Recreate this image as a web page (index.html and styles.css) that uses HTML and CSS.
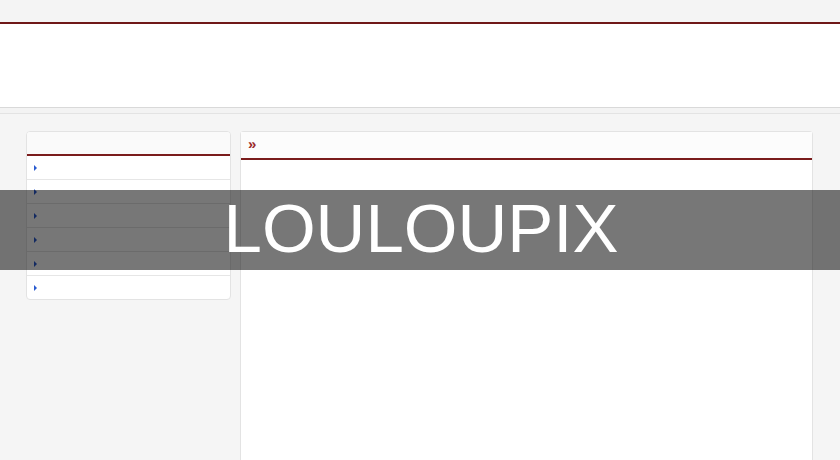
FILE: index.html
```html
<!DOCTYPE html>
<html>
<head>
<meta charset="utf-8">
<link rel="stylesheet" href="styles.css">
</head>
<body>
<div class="topbar"></div>
<div class="header"></div>
<div class="subband"></div>
<div class="content">
  <div class="sidebar">
    <div class="side-head"></div>
    <ul class="side-list">
      <li><span class="tri"></span></li>
      <li><span class="tri"></span></li>
      <li><span class="tri"></span></li>
      <li><span class="tri"></span></li>
      <li><span class="tri"></span></li>
      <li><span class="tri"></span></li>
    </ul>
  </div>
  <div class="mainbox">
    <div class="main-head"><span class="raquo">»</span></div>
    <div class="main-body"></div>
  </div>
</div>
<div class="overlay"><span class="title">LOULOUPIX</span></div>
</body>
</html>
```

FILE: styles.css
```css
html, body {
  margin: 0;
  padding: 0;
  height: 100%;
  overflow: hidden;
}
body {
  background: #f5f5f5;
  font-family: "Liberation Sans", Arial, sans-serif;
  position: relative;
}
.topbar {
  height: 22px;
  background: #f4f4f4;
  border-bottom: 2px solid #6f1818;
}
.header {
  height: 83px;
  background: #ffffff;
  border-bottom: 1px solid #d9d9d9;
}
.subband {
  height: 5px;
  background: #f3f3f3;
  border-bottom: 1px solid #e3e3e3;
}
.content {
  display: flex;
  align-items: flex-start;
  gap: 9px;
  padding: 17px 0 0 26px;
}
.sidebar {
  width: 203px;
  background: #ffffff;
  border: 1px solid #e3e3e3;
  border-radius: 4px;
  overflow: hidden;
}
.side-head {
  height: 22px;
  background: #fafafa;
  border-bottom: 2px solid #7a1c1c;
}
.side-list {
  list-style: none;
  margin: 0;
  padding: 0;
}
.side-list li {
  height: 23px;
  border-bottom: 1px solid #e6e6e6;
  display: flex;
  align-items: center;
  padding-left: 7px;
}
.side-list li:last-child {
  border-bottom: none;
}
.tri {
  width: 0;
  height: 0;
  border-top: 3px solid transparent;
  border-bottom: 3px solid transparent;
  border-left: 3px solid #2a5bd0;
}
.mainbox {
  width: 571px;
  height: 340px;
  background: #ffffff;
  border: 1px solid #e3e3e3;
  border-bottom: none;
  border-radius: 4px 4px 0 0;
}
.main-head {
  height: 22px;
  padding: 4px 0 0 7px;
  background: #fcfcfc;
  border-bottom: 2px solid #7a1c1c;
}
.raquo {
  display: block;
  color: #9b2a2a;
  font-size: 15px;
  line-height: 15px;
  font-weight: bold;
}
.overlay {
  position: absolute;
  left: 0;
  top: 190px;
  width: 100%;
  height: 80px;
  background: rgba(0, 0, 0, 0.535);
  display: flex;
  align-items: center;
  justify-content: center;
}
.title {
  color: #ffffff;
  font-family: "Liberation Sans", Arial, sans-serif;
  font-size: 69px;
  line-height: 1;
  padding-left: 2px;
  margin-top: -4px;
}
```
